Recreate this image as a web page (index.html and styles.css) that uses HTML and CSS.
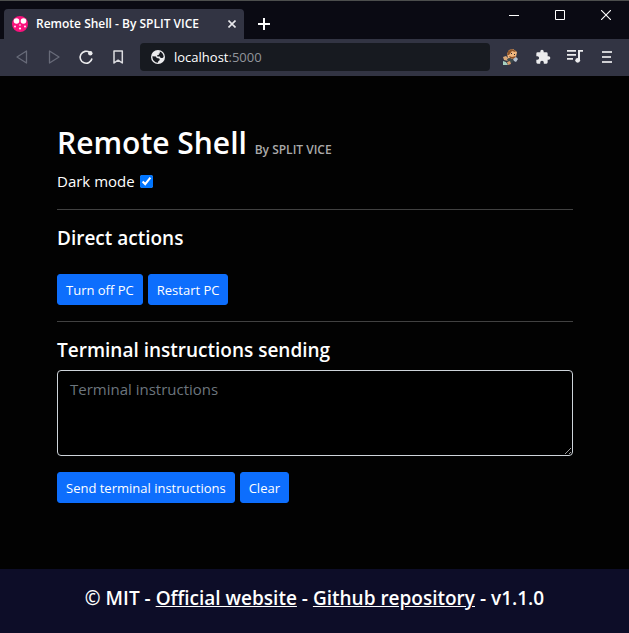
FILE: index.html
```html
<!DOCTYPE html>
<html lang="en">
<head>
<meta charset="utf-8">
<meta name="viewport" content="width=device-width, initial-scale=1">
<title>Remote Shell - By SPLIT VICE</title>
<link rel="stylesheet" href="styles.css">
</head>
<body>
<header class="browser">
  <div class="titlebar">
    <div class="tab">
      <svg class="favicon" width="16" height="16" viewBox="0 0 16 16" aria-hidden="true">
        <circle cx="8" cy="8" r="8" fill="#f9127c"/>
        <circle cx="4.500" cy="5" r="2.800" fill="#fff"/><circle cx="11.500" cy="5" r="2.800" fill="#fff"/>
        <circle cx="8" cy="9" r=".8" fill="#fff"/><circle cx="3" cy="10.500" r=".9" fill="#fff"/>
        <circle cx="13" cy="10.500" r=".9" fill="#fff"/><circle cx="8" cy="12.500" r="1.100" fill="#fff"/>
      </svg>
      <span class="tab-title">Remote Shell - By SPLIT VICE</span>
      <button class="icon-button" type="button" aria-label="Close tab">
        <svg width="8" height="8" viewBox="0 0 8 8" stroke="#e8e8ec" stroke-width="1.6"><path d="M0.5 0.5l7 7M7.5 0.5l-7 7"/></svg>
      </button>
    </div>
    <button class="icon-button new-tab" type="button" aria-label="New tab">
      <svg width="12" height="12" viewBox="0 0 12 12" stroke="#fff" stroke-width="2"><path d="M6 0v12M0 6h12"/></svg>
    </button>
    <div class="window-controls">
      <button class="icon-button" type="button" aria-label="Minimize">
        <svg width="10" height="10" viewBox="0 0 10 10" stroke="#fff"><path d="M0 5.5h10"/></svg>
      </button>
      <button class="icon-button" type="button" aria-label="Maximize">
        <svg width="10" height="10" viewBox="0 0 10 10" fill="none" stroke="#fff"><path d="M.5.5h9v9h-9z"/></svg>
      </button>
      <button class="icon-button" type="button" aria-label="Close">
        <svg width="10" height="10" viewBox="0 0 10 10" stroke="#fff" stroke-width="1.1"><path d="M0 0l10 10M10 0L0 10"/></svg>
      </button>
    </div>
  </div>
  <div class="toolbar">
    <div class="nav-buttons">
      <button class="icon-button" type="button" aria-label="Back">
        <svg width="16" height="16" viewBox="0 0 16 16" fill="none" stroke="#686b79" stroke-width="1.3" stroke-linejoin="round"><path d="M12.5 2v12L3 8z"/></svg>
      </button>
      <button class="icon-button" type="button" aria-label="Forward">
        <svg width="16" height="16" viewBox="0 0 16 16" fill="none" stroke="#686b79" stroke-width="1.3" stroke-linejoin="round"><path d="M3.5 2v12L13 8z"/></svg>
      </button>
      <button class="icon-button" type="button" aria-label="Reload">
        <svg width="16" height="16" viewBox="0 0 16 16"><path d="M11.800 3.500A6 6 0 1 0 14 9.500" fill="none" stroke="#ececee" stroke-width="1.600"/><circle cx="12.300" cy="4.300" r="2.200" fill="#ececee"/></svg>
      </button>
      <button class="icon-button" type="button" aria-label="Bookmark">
        <svg width="16" height="16" viewBox="0 0 16 16" fill="none" stroke="#dcdce0" stroke-width="1.5" stroke-linejoin="round"><path d="M4 2h8.3v12L8.1 11.2 4 14z"/></svg>
      </button>
    </div>
    <div class="address">
      <svg width="14" height="14" viewBox="0 0 14 14" aria-hidden="true">
        <circle cx="7" cy="7" r="7" fill="#ececee"/>
        <path d="M8.800 1.600C11 2.300 12.600 4.300 12.600 7l-1.100 1.100H9.600L8.900 6.400H6.300V4.900h1.500V3.400h1zM1.400 6.300L5 6.600l.7 1.500 2.600.3.500 1.500-1.500 1.300-.4 1.500C3.700 12.600 1.200 10 1.400 6.300z" fill="#171a20"/>
      </svg>
      <span>localhost<span class="port">:5000</span></span>
    </div>
    <div class="extensions">
      <button class="icon-button" type="button" aria-label="Profile">
        <svg width="16" height="16" viewBox="0 0 16 16"><path d="M4 5l2-4 4-1 4 3-1 5-4 2-4-1z" fill="#efb57e"/><path d="M4 6l1-4 4-2 4 2-1 1-3-1-3 4z" fill="#8d5428"/><path d="M6 7l3 1 4-1-2 3-4-1z" fill="#8d4f26"/><path d="M8 4h1v1H8zM11 5h1v1h-1z" fill="#29252a"/><path d="M0 8l3-1 3 3-1 2-4-1z" fill="#d9a878"/><path d="M4 10l3-1 4 2-2 3-4-1z" fill="#3d4a4d"/><path d="M0 12l3 1 2 3H0z" fill="#a6cfc0"/><path d="M4 13l3-1 1 3-3 1z" fill="#dba06d"/><path d="M10 10l3-2 2 2-2 3-2-1z" fill="#b7c1cf"/></svg>
      </button>
      <button class="icon-button" type="button" aria-label="Extensions">
        <svg width="16" height="16" viewBox="0 0 24 24" fill="#ececee"><path d="M20.5 11H19V7a2 2 0 0 0-2-2h-4V3.5a2.5 2.5 0 0 0-5 0V5H4a2 2 0 0 0-2 2v3.800h1.500a2.700 2.700 0 0 1 0 5.400H2V20a2 2 0 0 0 2 2h3.800v-1.500a2.700 2.700 0 0 1 5.400 0V22H17a2 2 0 0 0 2-2v-4h1.500a2.500 2.500 0 0 0 0-5z"/></svg>
      </button>
      <button class="icon-button" type="button" aria-label="Media">
        <svg width="16" height="16" viewBox="0 0 16 16" fill="#ececee"><path d="M0 1h9v1.700H0zM0 5h9v1.700H0zM0 9h6v1.700H0zM11 1h5v1.700h-3v9h-2z"/><circle cx="10.700" cy="11.300" r="2.400"/></svg>
      </button>
      <button class="icon-button" type="button" aria-label="Menu">
        <svg width="10" height="12" viewBox="0 0 10 12" fill="#cfcfd3"><path d="M0 0h10v2H0zM0 5h9v2H0zM0 10h10v2H0z"/></svg>
      </button>
    </div>
  </div>
</header>
<main class="content">
  <h1 class="title">Remote Shell <small class="byline">By SPLIT VICE</small></h1>
  <div class="mode">
    <label for="dark">Dark mode</label>
    <input class="check" id="dark" type="checkbox" checked>
  </div>
  <section class="section">
    <h2 class="heading">Direct actions</h2>
    <div class="actions direct">
      <button class="btn" type="button">Turn off PC</button>
      <button class="btn" type="button">Restart PC</button>
    </div>
  </section>
  <section class="section">
    <h2 class="heading"><label for="instructions">Terminal instructions sending</label></h2>
    <textarea class="terminal" id="instructions" placeholder="Terminal instructions"></textarea>
    <div class="actions">
      <button class="btn" type="button">Send terminal instructions</button>
      <button class="btn" type="button">Clear</button>
    </div>
  </section>
</main>
<footer class="footer">© MIT - <a href="#website">Official website</a> - <a href="#repository">Github repository</a> - v1.1.0</footer>
</body>
</html>
```
FILE: styles.css
```css
*, *::before, *::after { box-sizing: border-box; }

body {
  margin: 0;
  min-height: 100vh;
  display: flex;
  flex-direction: column;
  background: #020202;
  color: #fff;
  font: 15px/24px "Segoe UI", "Open Sans", "Noto Sans", sans-serif;
}

/* Browser chrome */
.browser { font-size: 13px; line-height: 20px; }

.titlebar {
  display: flex;
  height: 39px;
  padding-left: 4px;
  border-top: 1px solid #4c4e4d;
  background: #0a0a13;
}

.tab {
  display: flex;
  align-items: center;
  flex: 0 1 240px;
  gap: 8px;
  margin-top: 8px;
  padding: 0 8px;
  border-radius: 4px 4px 0 0;
  background: #323443;
}

.tab-title {
  flex: 1;
  overflow: hidden;
  white-space: nowrap;
  font-size: 12px;
  font-weight: 600;
}

.icon-button {
  display: flex;
  align-items: center;
  justify-content: center;
  padding: 0;
  border: 0;
  background: none;
}

.tab .icon-button { width: 8px; }
.new-tab { width: 40px; padding-top: 8px; }

.window-controls {
  display: flex;
  height: 28px;
  margin-left: auto;
}

.window-controls .icon-button { width: 46px; }

.toolbar {
  display: flex;
  align-items: center;
  height: 37px;
  padding: 0 6px 1px;
  background: #323443;
}

.nav-buttons { display: flex; }
.toolbar .icon-button { width: 32px; height: 28px; }

.address {
  display: flex;
  align-items: center;
  flex: 1;
  gap: 9px;
  height: 28px;
  margin: 0 5px 0 6px;
  padding: 0 11px;
  border-radius: 4px;
  background: #171a20;
}

.port { color: #92959b; }
.extensions { display: flex; }

/* Page */
.content {
  flex: 1;
  padding: 48px 56px 32px 57px;
}

.title {
  margin: 0;
  font-size: 30px;
  font-weight: 600;
  line-height: 38px;
}

.byline { color: #aaa; font-size: 12px; }

.mode { display: flex; align-items: center; gap: 5px; }

.check {
  width: 13px;
  height: 13px;
  margin: 0;
  accent-color: #0075ff;
}

.section {
  margin-top: 16px;
  padding-top: 16px;
  border-top: 1px solid #414141;
}

.heading {
  margin: 0 0 8px;
  font-size: 19px;
  font-weight: 600;
  line-height: 24px;
}

.actions { display: flex; gap: 5px; }
.direct { padding-top: 16px; }

.btn {
  height: 31px;
  padding: 0 8px;
  border: 1px solid #0d6efd;
  border-radius: 3px;
  background: #0d6efd;
  color: #fff;
  font: 13px/20px "Segoe UI", "Open Sans", "Noto Sans", sans-serif;
}

.terminal {
  display: block;
  width: 100%;
  height: 86px;
  margin-bottom: 16px;
  padding: 6px 12px;
  border: 1px solid #ced4da;
  border-radius: 4px;
  background: #000;
  color: #fff;
  font: inherit;
  resize: vertical;
}

.terminal::placeholder { color: #6c757d; }

.footer {
  padding: 17px 16px 23px;
  background: #0d0d28;
  font-size: 19px;
  font-weight: 600;
  text-align: center;
}

.footer a { color: #fff; }
```
